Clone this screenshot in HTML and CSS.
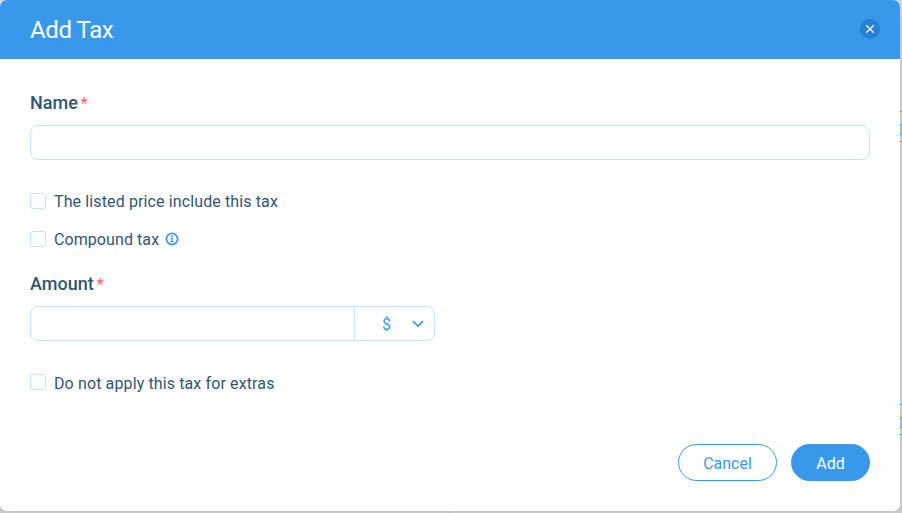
FILE: index.html
```html
<!DOCTYPE html>
<html lang="en">
<head>
<meta charset="utf-8">
<title>Add Tax</title>
<link rel="stylesheet" href="styles.css">
</head>
<body>
<div class="backdrop" aria-hidden="true">
  <i class="edge edge-one"></i><i class="edge edge-two"></i><i class="divider"></i>
</div>
<main class="modal">
  <header class="modal-header">
    <h1>Add Tax</h1>
    <button class="close" type="button" aria-label="Close">
      <svg width="20" height="20" viewBox="0 0 20 20"><path d="M6.2 6.2l7.6 7.6M13.8 6.2l-7.6 7.6" fill="none" stroke="#fff" stroke-width="1.3"/></svg>
    </button>
  </header>
  <form class="modal-body">
    <label class="label" for="name">Name<span class="required">*</span></label>
    <input class="field" id="name" type="text">
    <label class="check check-listed"><input type="checkbox"><span>The listed price include this tax</span></label>
    <label class="check check-compound"><input type="checkbox"><span>Compound tax</span>
      <svg class="info" width="14" height="14" viewBox="0 0 14 14"><circle cx="7" cy="7" r="5.6" fill="none" stroke="#3899ec" stroke-width="1.8"/><path d="M5.5 6.3H7.2V9.7M5.3 9.7H8.8" fill="none" stroke="#3899ec" stroke-width="1.3"/><rect x="6.2" y="3.5" width="1.7" height="1.6" fill="#3899ec"/></svg>
    </label>
    <label class="label label-amount" for="amount">Amount<span class="required">*</span></label>
    <div class="amount">
      <input id="amount" type="text">
      <button class="unit" type="button"><span>$</span>
        <svg width="12" height="8" viewBox="0 0 12 8"><path d="M1 1.2L6 6.1L11 1.2" fill="none" stroke="#3899ec" stroke-width="1.7"/></svg>
      </button>
    </div>
    <label class="check check-extras"><input type="checkbox"><span>Do not apply this tax for extras</span></label>
    <footer class="actions">
      <button class="btn btn-cancel" type="button">Cancel</button>
      <button class="btn btn-add" type="button">Add</button>
    </footer>
  </form>
</main>
</body>
</html>
```
FILE: styles.css
```css
* { box-sizing: border-box; }
body {
  margin: 0;
  height: 513px;
  overflow: hidden;
  background: #c5cbd1;
  color: #2f5672;
  font: 16px/24px Roboto, sans-serif;
}
button, input { font: inherit; margin: 0; padding: 0; }
.backdrop { position: absolute; inset: 0; background: linear-gradient(#d3d5d8 17px, #c5cbd1 17px); }
.edge { position: absolute; right: 0; width: 2px; height: 31px; border: solid #579fd8; border-width: 1px 0; }
.edge::after { content: ""; position: absolute; top: 12px; left: 0; width: 2px; height: 9px; background: #92bad9; border: solid #579fd8; border-width: 1px 0; }
.edge-one { top: 111px; }
.edge-two { top: 404px; }
.divider { position: absolute; left: 450px; bottom: 0; width: 1px; height: 2px; background: #acb4bc; }
.modal {
  position: relative;
  width: 900px;
  height: 511px;
  overflow: hidden;
  border-radius: 7px;
  background: #fff;
}
.modal-header {
  display: flex;
  align-items: center;
  justify-content: space-between;
  height: 59px;
  padding: 0 20px 0 30px;
  background: #3899ec;
}
h1 { margin: 1px 0 0; color: #fff; font-size: 24px; line-height: 30px; font-weight: 400; letter-spacing: -0.4px; }
.close { width: 20px; height: 20px; margin-bottom: 2px; border: 0; border-radius: 50%; background: #2481d6; }
.close svg { display: block; }
.modal-body { display: flex; flex-direction: column; padding: 32px 30px 0; }
.label { display: flex; height: 24px; font-size: 18px; font-weight: 500; }
.required { margin: 1px 0 0 3px; color: #ff5c5c; font-size: 16px; font-weight: 400; }
.field, .amount { height: 35px; border: 1px solid #c1e4fe; border-radius: 8px; background: #fff; }
.field { width: 100%; margin-top: 10px; }
.check { display: flex; align-items: center; height: 24px; letter-spacing: 0.12px; }
.check span { padding-top: 2px; }
.check input { appearance: none; width: 16px; height: 16px; margin-right: 8px; border: 1px solid #c1e4fe; border-radius: 3px; background: #fff; }
.check-listed { margin-top: 29px; }
.check-compound { margin-top: 14px; letter-spacing: 0.08px; }
.info { margin-left: 6px; }
.label-amount { margin-top: 21px; }
.amount { display: flex; width: 405px; margin-top: 10px; }
.amount input { flex: 1; min-width: 0; border: 0; border-radius: 8px; background: transparent; }
.unit {
  display: flex;
  align-items: center;
  justify-content: space-between;
  width: 80px;
  padding: 0 10px 0 27px;
  border: 0;
  border-left: 1px solid #c1e4fe;
  background: transparent;
  color: #3899ec;
}
.unit span { padding-top: 2px; }
.check-extras { margin-top: 30px; }
.check-extras input { position: relative; top: -1px; }
.actions { display: flex; justify-content: flex-end; gap: 14px; margin-top: 49px; }
.btn { height: 37px; padding-top: 2px; border: 1px solid #3899ec; border-radius: 19px; }
.btn-cancel { width: 99px; background: #fff; color: #3899ec; }
.btn-add { width: 79px; background: #3899ec; color: #fff; }
```
